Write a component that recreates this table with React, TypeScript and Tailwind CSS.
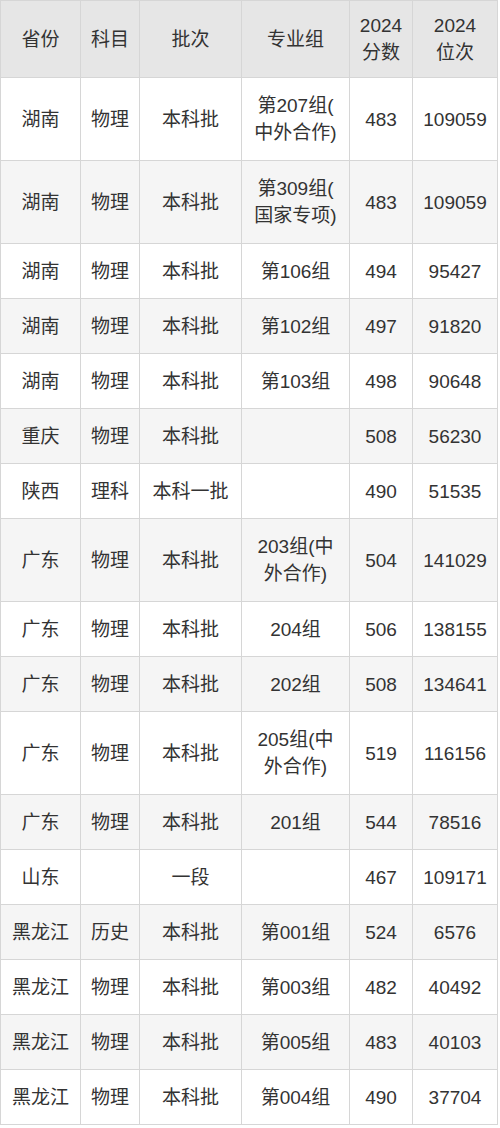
import React from 'react';

type Row = {
  province: string;
  subject: string;
  batch: string;
  group: string[];
  score: string;
  rank: string;
};

const rows: Row[] = [
  { province: '湖南', subject: '物理', batch: '本科批', group: ['第207组(', '中外合作)'], score: '483', rank: '109059' },
  { province: '湖南', subject: '物理', batch: '本科批', group: ['第309组(', '国家专项)'], score: '483', rank: '109059' },
  { province: '湖南', subject: '物理', batch: '本科批', group: ['第106组'], score: '494', rank: '95427' },
  { province: '湖南', subject: '物理', batch: '本科批', group: ['第102组'], score: '497', rank: '91820' },
  { province: '湖南', subject: '物理', batch: '本科批', group: ['第103组'], score: '498', rank: '90648' },
  { province: '重庆', subject: '物理', batch: '本科批', group: [], score: '508', rank: '56230' },
  { province: '陕西', subject: '理科', batch: '本科一批', group: [], score: '490', rank: '51535' },
  { province: '广东', subject: '物理', batch: '本科批', group: ['203组(中', '外合作)'], score: '504', rank: '141029' },
  { province: '广东', subject: '物理', batch: '本科批', group: ['204组'], score: '506', rank: '138155' },
  { province: '广东', subject: '物理', batch: '本科批', group: ['202组'], score: '508', rank: '134641' },
  { province: '广东', subject: '物理', batch: '本科批', group: ['205组(中', '外合作)'], score: '519', rank: '116156' },
  { province: '广东', subject: '物理', batch: '本科批', group: ['201组'], score: '544', rank: '78516' },
  { province: '山东', subject: '', batch: '一段', group: [], score: '467', rank: '109171' },
  { province: '黑龙江', subject: '历史', batch: '本科批', group: ['第001组'], score: '524', rank: '6576' },
  { province: '黑龙江', subject: '物理', batch: '本科批', group: ['第003组'], score: '482', rank: '40492' },
  { province: '黑龙江', subject: '物理', batch: '本科批', group: ['第005组'], score: '483', rank: '40103' },
  { province: '黑龙江', subject: '物理', batch: '本科批', group: ['第004组'], score: '490', rank: '37704' },
];

const base = 'border border-[#d6d6d6] px-1 text-center align-middle';
const head = `${base} py-[11px] font-normal`;

export default function App() {
  return (
    <div
      className="w-[500px] bg-white text-[19px] leading-[27px] text-[#333333]"
      style={{ fontFamily: '"Liberation Sans", "Noto Sans CJK SC", sans-serif' }}
    >
      <table className="w-[497px] table-fixed border-collapse">
        <colgroup>
          <col className="w-[80px]" />
          <col className="w-[59px]" />
          <col className="w-[102px]" />
          <col className="w-[108px]" />
          <col className="w-[63px]" />
          <col className="w-[85px]" />
        </colgroup>
        <thead>
          <tr className="bg-[#e6e6e6]">
            <th className={head}>省份</th>
            <th className={head}>科目</th>
            <th className={head}>批次</th>
            <th className={head}>专业组</th>
            <th className={head}>
              2024
              <br />
              分数
            </th>
            <th className={head}>
              2024
              <br />
              位次
            </th>
          </tr>
        </thead>
        <tbody>
          {rows.map((r, i) => {
            const cell = `${base} ${r.group.length > 1 ? 'py-[14px]' : 'py-[13.5px]'}`;
            return (
              <tr key={i} className={i % 2 === 1 ? 'bg-[#f5f5f5]' : 'bg-white'}>
                <td className={cell}>{r.province}</td>
                <td className={cell}>{r.subject}</td>
                <td className={cell}>{r.batch}</td>
                <td className={`${cell} whitespace-nowrap`}>
                  {r.group.map((g, j) => (
                    <div key={j}>{g}</div>
                  ))}
                </td>
                <td className={cell}>{r.score}</td>
                <td className={cell}>{r.rank}</td>
              </tr>
            );
          })}
        </tbody>
      </table>
    </div>
  );
}
